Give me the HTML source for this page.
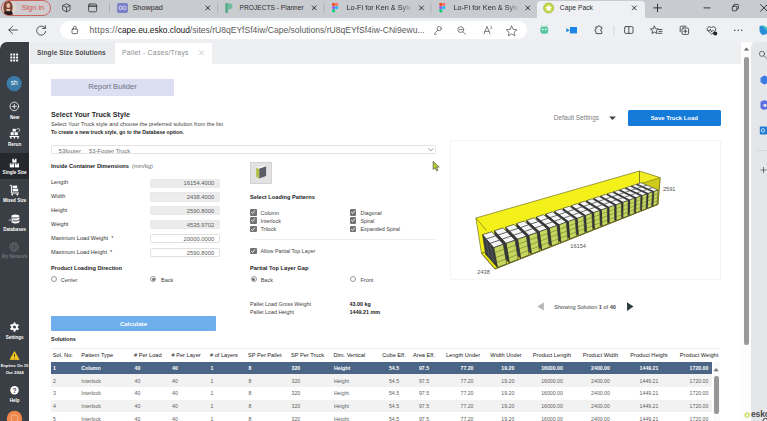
<!DOCTYPE html>
<html><head><meta charset="utf-8"><title>Cape Pack</title>
<style>
html,body{margin:0;padding:0;}
body{width:767px;height:421px;overflow:hidden;position:relative;background:#fff;font-family:"Liberation Sans",sans-serif;}
div{box-sizing:border-box;}
</style></head><body>
<div style="position:absolute;left:0.00px;top:0.00px;width:767.00px;height:18.00px;background:#c8cbd0;"></div>
<div style="position:absolute;left:0.00px;top:18.00px;width:767.00px;height:24.50px;background:#eef0f3;"></div>
<div style="position:absolute;left:537.00px;top:0.50px;width:107.70px;height:18.00px;background:#eef0f3;border-radius:4px 4px 0 0;"></div>
<div style="position:absolute;left:59.50px;top:21.40px;width:467.50px;height:17.70px;background:#ffffff;border-radius:9px;"></div>
<div style="position:absolute;left:1.3px;top:0.3px;width:49.5px;height:15.7px;border:0.6px solid #c8645e;border-radius:8px;box-sizing:border-box;background:#cfcbce"></div>
<svg style="position:absolute;left:0;top:0;" width="767" height="421" viewBox="0 0 767 421"><defs><clipPath id="av"><circle cx="9.3" cy="8.1" r="7.2"/></clipPath></defs><g clip-path="url(#av)"><rect x="0" y="0" width="20" height="17" fill="#ddd5d0"/><ellipse cx="8" cy="7.5" rx="4.6" ry="7" fill="#7a4030"/><ellipse cx="8.3" cy="5.6" rx="2" ry="2.5" fill="#e3bda5"/><path d="M3.5 16 q0 -6 4.8 -6 q4.800 0 4.800 6z" fill="#2a1c1c"/><rect x="6.3" y="9" width="4" height="2.2" fill="#e3bda5"/></g></svg>
<div style="position:absolute;top:2.90px;height:10px;line-height:10px;font-size:7.49px;font-weight:normal;color:#d25a55;white-space:nowrap;left:21.40px;">Sign in</div>
<div style="position:absolute;top:2.90px;height:10px;line-height:10px;font-size:7.31px;font-weight:normal;color:#2b2b2b;white-space:nowrap;left:132.50px;">Showpad</div>
<div style="position:absolute;top:2.90px;height:10px;line-height:10px;font-size:6.64px;font-weight:normal;color:#2b2b2b;white-space:nowrap;left:239.60px;">PROJECTS - Planner</div>
<div style="position:absolute;left:346.5px;top:3px;width:66px;height:10px;line-height:10px;font-size:7.32px;color:#2b2b2b;white-space:nowrap;overflow:hidden;-webkit-mask-image:linear-gradient(90deg,#000 80%,transparent 100%);">Lo-Fi for Ken &amp; Sylv</div>
<div style="position:absolute;left:453.5px;top:3px;width:66px;height:10px;line-height:10px;font-size:7.32px;color:#2b2b2b;white-space:nowrap;overflow:hidden;-webkit-mask-image:linear-gradient(90deg,#000 80%,transparent 100%);">Lo-Fi for Ken &amp; Sylv</div>
<div style="position:absolute;top:2.90px;height:10px;line-height:10px;font-size:6.79px;font-weight:normal;color:#2b2b2b;white-space:nowrap;left:559.80px;">Cape Pack</div>
<div style="position:absolute;left:117.30px;top:2.60px;width:10.50px;height:10.50px;background:#7c80c6;border-radius:2px;"></div>
<svg style="position:absolute;left:0;top:0;" width="767" height="421" viewBox="0 0 767 421"><g fill="none" stroke="#eceaff" stroke-width="0.8"><circle cx="120.6" cy="7.9" r="1.7"/><circle cx="124.4" cy="7.9" r="1.7"/></g></svg>
<svg style="position:absolute;left:0;top:0;" width="767" height="421" viewBox="0 0 767 421">
<g fill="none" stroke="#333" stroke-width="0.8" stroke-linecap="round" stroke-linejoin="round">
<path d="M63 5.5 L66.5 3.8 L70 5.5 L70 10 L66.5 11.8 L63 10 Z M63 5.5 L66.5 7.3 L70 5.5 M66.5 7.3 V11.8"/>
<rect x="88.6" y="4" width="8" height="7.8" rx="1.2"/><path d="M88.6 6.2 H96.6" stroke-width="1.3"/>
<path d="M109.5 3.5 V12.5" stroke="#999" stroke-width="0.5"/>
<path d="M217.7 3.5 V12.5 M323.9 3.5 V12.5 M430.8 3.5 V12.5" stroke="#999" stroke-width="0.5"/>
<path d="M205.8 5.9 l4 4 m0 -4 l-4 4 M312.2 5.9 l4 4 m0 -4 l-4 4 M419.4 5.9 l4 4 m0 -4 l-4 4 M525.8 5.9 l4 4 m0 -4 l-4 4 M632.3 5.9 l4 4 m0 -4 l-4 4" stroke="#222" stroke-width="0.9"/>
<path d="M653.7 7.9 h7.6 M657.5 4.1 v7.6" stroke="#222" stroke-width="0.9"/>
<path d="M704 7.9 h6" stroke="#222" stroke-width="0.9"/>
<rect x="732.3" y="6.2" width="4.6" height="4.6" rx="1" stroke="#222" stroke-width="0.8"/><path d="M733.8 6 V5.2 q0 -0.8 0.8 -0.8 h2.8 q1 0 1 1 v2.8 q0 .8 -.8 .8 h-0.6" stroke="#222" stroke-width="0.8"/>
<path d="M760.6 4.6 l6.6 6.6 m0 -6.6 l-6.6 6.6" stroke="#222" stroke-width="0.9"/>
</g>
<!-- planner favicon -->
<path d="M225.5 3.2 h4 q3 0 3 3 t-3 3 h-1.3 v3.6 h-2.7z" fill="#74bd9c"/><path d="M225.5 3.2 h2.2 v9.6 h-2.2z" fill="#55a987"/>
<!-- figma favicons -->
<g id="fig"><circle cx="333.6" cy="4.4" r="1.7" fill="#f24e1e"/><circle cx="336.6" cy="4.4" r="1.7" fill="#ff7262"/><circle cx="333.6" cy="7.6" r="1.7" fill="#a259ff"/><circle cx="336.6" cy="7.6" r="1.7" fill="#1abcfe"/><circle cx="333.6" cy="10.8" r="1.7" fill="#0acf83"/></g>
<use href="#fig" x="107.2" y="0"/>
<!-- cape pack favicon -->
<circle cx="548.6" cy="8" r="5" fill="#c9d94a"/><circle cx="548.6" cy="8" r="5" fill="none" stroke="#9db53a" stroke-width="0.8"/><path d="M548.6 4.6 l1 2.2 2.4 .3 -1.8 1.6 .5 2.4 -2.1 -1.2 -2.1 1.2 .5 -2.4 -1.8 -1.6 2.4 -.3z" fill="#fff"/>
<!-- toolbar icons -->
<g fill="none" stroke="#3a3a3a" stroke-width="0.85" stroke-linecap="round" stroke-linejoin="round">
<path d="M17.5 30 H8.8 M12.6 26.2 L8.8 30 L12.6 33.8"/>
<path d="M45.2 28.2 A4.6 4.6 0 1 0 45.8 31.4 M45.4 25.6 V28.4 H42.6"/>
<rect x="72" y="29" width="5.6" height="4.6" rx="0.8" stroke="#555"/><path d="M73.4 29 V27.6 a1.4 1.4 0 0 1 2.8 0 V29" stroke="#555"/>
<g stroke="#666">
<circle cx="439.3" cy="28.6" r="2.1"/><path d="M437.8 30.2 L434.6 33.4 v1 h1.4"/>
<circle cx="460.8" cy="29.6" r="2.9"/><path d="M463 31.8 L465.4 34.2 M459.4 29.6 h2.8"/>
<path d="M484 33.8 L487 26.4 L490 33.8 M485 31.4 h4 M491 26.2 q1.2 1.2 0 2.6"/>
<path d="M511.6 26 l1.6 3.4 3.7 .4 -2.8 2.5 .8 3.6 -3.3 -1.9 -3.3 1.9 .8 -3.6 -2.8 -2.5 3.7 -.4z"/>
</g>
<path d="M596 27 h1.6 a1.2 1.2 0 1 1 2.4 0 h1.8 v2 a1.2 1.2 0 1 0 0 2.4 v2.2 h-5.8 v-2.2 a1.2 1.2 0 1 1 0 -2.4 z"/>
<path d="M614 26 V34.5" stroke="#bbb" stroke-width="0.5"/>
<rect x="624.6" y="26.6" width="8.4" height="6.8" rx="1.2"/><path d="M628.8 26.6 V33.4"/>
<path d="M654.4 26.2 l1.2 2.5 2.7 .3 -2 1.8 .6 2.7 -2.5 -1.4 -2.4 1.4 .5 -2.7 -2 -1.8 2.7 -.3z M658.6 29.5 h3.4 M659 31.4 h3 M658 33.3 h4"/>
<rect x="682" y="28" width="6.6" height="6.4" rx="1.2"/><path d="M680.2 31.6 V27.4 q0 -1.2 1.2 -1.2 H686 M685.3 29.6 v3.2 M683.7 31.2 h3.2"/>
<path d="M711.5 34 l-4 -3.8 a2.3 2.3 0 0 1 3.6 -2.8 l.4 .5 .4 -.5 a2.3 2.3 0 0 1 3.6 2.8 z M707.6 30.6 h2 l.8 -1.4 1 2.6 .8 -1.2 h1"/>
</g>
<circle cx="715.2" cy="33.4" r="2" fill="#222"/>
<circle cx="734.8" cy="30.2" r="0.7" fill="#333"/><circle cx="738.3" cy="30.2" r="0.7" fill="#333"/><circle cx="741.8" cy="30.2" r="0.7" fill="#333"/>
<!-- green ext -->
<rect x="540.4" y="26.4" width="7.8" height="7.4" rx="2.4" fill="#5bc6a0"/><circle cx="542.8" cy="29.4" r="0.8" fill="#e8fff6"/><circle cx="545.8" cy="29.4" r="0.8" fill="#e8fff6"/><path d="M542 26.4 l-.8 -1.4 M546.4 26.4 l.8 -1.4" stroke="#5bc6a0" stroke-width="0.7"/>
<!-- blue ext -->
<rect x="570" y="27" width="7" height="6.4" fill="#1b86e8"/><path d="M566.3 28.2 l3.6 2 -3.6 2z" fill="#1b86e8"/>
<!-- copilot -->
<path d="M759.5 26.5 q3 -2 5.5 0.5 l2 3.5 v3 q-3 2.5 -6 .5 l-1.5 -3z" fill="#2a8fd6"/><path d="M762 26 q2.5 -1 5 1.5 v3z" fill="#3cc7c0"/>
</svg>
<div style="position:absolute;top:25.40px;height:10px;line-height:10px;font-size:8.55px;font-weight:normal;color:#555;white-space:nowrap;left:89.40px;"><span style="color:#5a5a5a;letter-spacing:0.33px">https://</span><span style="color:#161616;font-size:8.4px">cape.eu.esko.cloud</span><span style="color:#5a5a5a">/sites/rU8qEYfSf4iw/Cape/solutions/rU8qEYfSf4iw-CNi9ewu...</span></div>
<div style="position:absolute;left:0.00px;top:42.50px;width:767.00px;height:379.00px;background:#ffffff;"></div>
<div style="position:absolute;left:29.50px;top:42.30px;width:715.00px;height:21.50px;background:#eeeff0;"></div>
<div style="position:absolute;left:115.00px;top:43.30px;width:97.00px;height:20.70px;background:#ffffff;"></div>
<div style="position:absolute;left:30.00px;top:42.30px;width:85.00px;height:21.50px;background:#ebecee;"></div>
<div style="position:absolute;top:47.50px;height:10px;line-height:10px;font-size:6.50px;font-weight:bold;color:#474a4e;white-space:nowrap;left:37.00px;letter-spacing:0.15px;">Single Size Solutions</div>
<div style="position:absolute;top:47.50px;height:10px;line-height:10px;font-size:6.90px;font-weight:normal;color:#8a8d91;white-space:nowrap;left:122.00px;letter-spacing:0.25px;">Pallet - Cases/Trays</div>
<svg style="position:absolute;left:0;top:0;" width="767" height="421" viewBox="0 0 767 421"><path d="M199.2 50.4 l4.6 4.6 m0 -4.6 l-4.6 4.6" stroke="#b4b4b4" stroke-width="0.7" fill="none"/></svg>
<div style="position:absolute;left:0.00px;top:42.30px;width:29.30px;height:379.00px;background:#3a3e45;border-radius:7px 0 0 0;"></div>
<div style="position:absolute;left:0.00px;top:152.60px;width:29.30px;height:26.70px;background:#25282d;"></div>
<svg style="position:absolute;left:0;top:0;" width="767" height="421" viewBox="0 0 767 421">
<g fill="#fff">
<rect x="10.3" y="53.6" width="2" height="2" rx="0.3"/><rect x="10.3" y="56.5" width="2" height="2" rx="0.3"/><rect x="10.3" y="59.4" width="2" height="2" rx="0.3"/><rect x="13.2" y="53.6" width="2" height="2" rx="0.3"/><rect x="13.2" y="56.5" width="2" height="2" rx="0.3"/><rect x="13.2" y="59.4" width="2" height="2" rx="0.3"/><rect x="16.1" y="53.6" width="2" height="2" rx="0.3"/><rect x="16.1" y="56.5" width="2" height="2" rx="0.3"/><rect x="16.1" y="59.4" width="2" height="2" rx="0.3"/>
</g>
<circle cx="14.2" cy="83.6" r="7.6" fill="#3c7ba8"/>
<g fill="none" stroke="#fff" stroke-width="0.8" stroke-linecap="round">
<circle cx="14.3" cy="106.4" r="4.3"/><path d="M14.3 104.2 v4.4 M12.1 106.4 h4.4"/>
</g>
<!-- rerun -->
<g fill="#fff">
<rect x="10.6" y="132.2" width="3.2" height="3" /><rect x="14.6" y="132.2" width="3.2" height="3"/><rect x="12.6" y="128.8" width="3.2" height="2.8"/>
<rect x="9.6" y="136" width="9.6" height="1"/><rect x="10.2" y="137" width="1.4" height="1.6"/><rect x="13.7" y="137" width="1.4" height="1.6"/><rect x="17.2" y="137" width="1.4" height="1.6"/>
</g>
<path d="M16.6 130 a1.6 1.6 0 1 1 1.6 1.6" fill="none" stroke="#fff" stroke-width="0.6"/>
<!-- single size -->
<g fill="#fff">
<rect x="12.3" y="158.8" width="4.2" height="3.8"/><rect x="9.8" y="163.4" width="4.2" height="4"/><rect x="14.8" y="163.4" width="4.2" height="4"/>
</g>
<g fill="#25282d"><rect x="13.9" y="158.8" width="1" height="1.4"/><rect x="11.4" y="163.4" width="1" height="1.4"/><rect x="16.4" y="163.4" width="1" height="1.4"/></g>
<!-- mixed size -->
<g fill="none" stroke="#fff" stroke-width="1" stroke-linejoin="miter">
<path d="M9.8 185.4 h1.6 v7.6 h7.6"/>
</g>
<g fill="#fff"><rect x="12.6" y="185.6" width="4.6" height="2.6"/><rect x="12.6" y="188.8" width="5.6" height="2.6"/><circle cx="12.2" cy="194.4" r="1"/><circle cx="17.4" cy="194.4" r="1"/></g>
<!-- databases -->
<g fill="#fff">
<ellipse cx="15.4" cy="216" rx="4" ry="1.6"/>
<path d="M11.4 217.2 q4 2.4 8 0 v2 q-4 2.4 -8 0z M11.4 220.2 q4 2.4 8 0 v2 q-4 2.4 -8 0z"/>
<path d="M8.6 219.4 h3.4 v-1.2 l2.2 1.8 -2.2 1.8 v-1.2 h-3.4z" stroke="#3a3e45" stroke-width="0.4"/>
</g>
<!-- my network -->
<g fill="none" stroke="#70747b" stroke-width="0.6">
<circle cx="14.2" cy="247" r="4.4"/><ellipse cx="14.2" cy="247" rx="2" ry="4.4"/><path d="M9.8 247 h8.8 M10.5 244.8 h7.4 M10.5 249.2 h7.4"/>
</g>
<!-- settings gear -->
<g transform="translate(14.5 327.1)">
<g fill="#fff">
<circle r="3.3"/>
<rect x="-1" y="-4.6" width="2" height="9.2"/>
<rect x="-1" y="-4.6" width="2" height="9.2" transform="rotate(60)"/>
<rect x="-1" y="-4.6" width="2" height="9.2" transform="rotate(120)"/>
</g>
<circle r="1.5" fill="#3a3e45"/>
</g>
<!-- warning -->
<path d="M14.5 351.6 L19 359.4 H10 Z" fill="#f6c51c" stroke="#f6c51c" stroke-width="0.8" stroke-linejoin="round"/>
<path d="M14.5 354.2 v2.8 M14.5 358 v0.7" stroke="#3a3e45" stroke-width="0.9"/>
<!-- help -->
<circle cx="14.5" cy="390.3" r="4.2" fill="#fff"/>
<!-- orange -->
<circle cx="14.5" cy="418.4" r="7.7" fill="#f0874c"/>
<circle cx="14.5" cy="418.4" r="3.6" fill="none" stroke="#f8b58c" stroke-width="1"/>
</svg>
<div style="position:absolute;top:78.40px;height:10px;line-height:10px;font-size:6.60px;font-weight:normal;color:#ffffff;white-space:nowrap;left:4.20px;width:20.00px;text-align:center;">sh</div>
<div style="position:absolute;top:385.50px;height:10px;line-height:10px;font-size:6.80px;font-weight:bold;color:#3a3e45;white-space:nowrap;left:9.50px;width:10.00px;text-align:center;">?</div>
<div style="position:absolute;top:112.50px;height:10px;line-height:10px;font-size:4.55px;font-weight:bold;color:#ffffff;white-space:nowrap;left:-5.40px;width:40.00px;text-align:center;">New</div>
<div style="position:absolute;top:139.80px;height:10px;line-height:10px;font-size:4.55px;font-weight:bold;color:#ffffff;white-space:nowrap;left:-5.40px;width:40.00px;text-align:center;">Rerun</div>
<div style="position:absolute;top:168.30px;height:10px;line-height:10px;font-size:4.55px;font-weight:bold;color:#ffffff;white-space:nowrap;left:-5.40px;width:40.00px;text-align:center;">Single Size</div>
<div style="position:absolute;top:196.30px;height:10px;line-height:10px;font-size:4.55px;font-weight:bold;color:#ffffff;white-space:nowrap;left:-5.40px;width:40.00px;text-align:center;">Mixed Size</div>
<div style="position:absolute;top:224.80px;height:10px;line-height:10px;font-size:4.55px;font-weight:bold;color:#ffffff;white-space:nowrap;left:-5.40px;width:40.00px;text-align:center;">Databases</div>
<div style="position:absolute;top:252.30px;height:10px;line-height:10px;font-size:4.55px;font-weight:bold;color:#70747b;white-space:nowrap;left:-5.40px;width:40.00px;text-align:center;">My Network</div>
<div style="position:absolute;top:332.70px;height:10px;line-height:10px;font-size:4.55px;font-weight:bold;color:#ffffff;white-space:nowrap;left:-5.40px;width:40.00px;text-align:center;">Settings</div>
<div style="position:absolute;top:361.40px;height:10px;line-height:10px;font-size:4.15px;font-weight:bold;color:#ffffff;white-space:nowrap;left:-5.40px;width:40.00px;text-align:center;">Expires On 15</div>
<div style="position:absolute;top:367.70px;height:10px;line-height:10px;font-size:4.30px;font-weight:bold;color:#ffffff;white-space:nowrap;left:-5.40px;width:40.00px;text-align:center;">Oct 2024</div>
<div style="position:absolute;top:395.90px;height:10px;line-height:10px;font-size:4.55px;font-weight:bold;color:#ffffff;white-space:nowrap;left:-5.40px;width:40.00px;text-align:center;">Help</div>
<div style="position:absolute;left:741.30px;top:42.30px;width:10.00px;height:379.00px;background:#fdfdfd;"></div>
<div style="position:absolute;left:744.20px;top:56.60px;width:4.70px;height:288.60px;background:#999999;border-radius:2.35px;"></div>
<svg style="position:absolute;left:0;top:0;" width="767" height="421" viewBox="0 0 767 421"><polygon points="743.9,50.6 749.1,50.6 746.5,47.6" fill="#666"/></svg>
<div style="position:absolute;left:751.00px;top:42.30px;width:16.00px;height:379.00px;background:#e5e6ea;border-radius:5px 0 0 0;"></div>
<svg style="position:absolute;left:0;top:0;" width="767" height="421" viewBox="0 0 767 421">
<g fill="none" stroke="#555" stroke-width="0.8" stroke-linecap="round"><circle cx="762" cy="53.8" r="2.6"/><path d="M764 55.8 L766.4 58.2"/></g>
<path d="M760.5 78 l3.5 -2.5 3 1 v7 l-3 1 -3.5 -2.5z" fill="#3d7be0"/>
<path d="M760.5 102 q3 -3 6.5 -1 v8 q-3.500 2 -6.500 -1z" fill="#5a6fe0"/><circle cx="765" cy="105.3" r="1.6" fill="#e5e6ea"/>
<rect x="759.8" y="126.4" width="7.2" height="8" rx="1" fill="#1f7ad6"/><circle cx="763" cy="130.4" r="1.7" fill="none" stroke="#fff" stroke-width="0.8"/>
<path d="M757 150.5 H767" stroke="#c9c9c9" stroke-width="0.6"/>
<path d="M760.5 170 h6 M763.500 167 v6" stroke="#444" stroke-width="0.7"/>
<!-- esko logo -->
<circle cx="747.2" cy="415.1" r="2.7" fill="#c5d64a"/><path d="M747.2 413 l.6 1.400 1.500 .1 -1.100 1 .4 1.500 -1.400 -.8 -1.400 .8 .4 -1.500 -1.100 -1 1.500 -.1z" fill="#fff"/>
<circle cx="765.500" cy="421" r="2.600" fill="none" stroke="#333" stroke-width="1"/>
</svg>
<div style="position:absolute;top:409.30px;height:10px;line-height:10px;font-size:8.60px;font-weight:bold;color:#4a4a4a;white-space:nowrap;left:751.00px;letter-spacing:-0.2px;">esko</div>
<div style="position:absolute;left:51.00px;top:78.50px;width:123.00px;height:17.00px;background:#dcdff2;"></div>
<div style="position:absolute;top:82.00px;height:10px;line-height:10px;font-size:7.60px;font-weight:normal;color:#6d7080;white-space:nowrap;left:12.50px;width:200.00px;text-align:center;">Report Builder</div>
<div style="position:absolute;top:110.00px;height:10px;line-height:10px;font-size:7.17px;font-weight:bold;color:#2a2a2a;white-space:nowrap;left:51.00px;">Select Your Truck Style</div>
<div style="position:absolute;top:119.00px;height:10px;line-height:10px;font-size:5.60px;font-weight:normal;color:#444;white-space:nowrap;left:51.00px;">Select Your Truck style and choose the preferred solution from the list</div>
<div style="position:absolute;top:127.00px;height:10px;line-height:10px;font-size:5.15px;font-weight:bold;color:#222;white-space:nowrap;left:51.00px;">To create a new truck style, go to the Database option.</div>
<div style="position:absolute;left:51px;top:145px;width:384.5px;height:9px;border:0.6px solid #e3e3e3;border-radius:1.5px;box-sizing:border-box;background:#fff"></div>
<svg style="position:absolute;left:0;top:0;z-index:5;" width="767" height="421" viewBox="0 0 767 421"><path d="M428.3 148.4 L430.8 150.8 L433.3 148.4" fill="none" stroke="#666" stroke-width="0.7"/><path d="M433.1 161.3 L433.1 169.6 L435.2 167.8 L436.7 170.9 L437.9 170.3 L436.5 167.3 L439.3 167.1 Z" fill="#b7ca35" stroke="#2b2b2b" stroke-width="0.5" stroke-linejoin="round"/></svg>
<div style="position:absolute;top:145.80px;height:10px;line-height:10px;font-size:6.10px;font-weight:normal;color:#6f6f6f;white-space:nowrap;left:58.60px;">53footer</div>
<div style="position:absolute;top:145.80px;height:10px;line-height:10px;font-size:5.85px;font-weight:normal;color:#6f6f6f;white-space:nowrap;left:88.90px;">53-Footer Truck</div>
<div style="position:absolute;top:161.20px;height:10px;line-height:10px;font-size:5.66px;font-weight:bold;color:#222;white-space:nowrap;left:51.00px;">Inside Container Dimensions</div>
<div style="position:absolute;top:161.20px;height:10px;line-height:10px;font-size:5.70px;font-weight:normal;color:#666;white-space:nowrap;left:132.00px;">(mm/kg)</div>
<div style="position:absolute;top:177.40px;height:10px;line-height:10px;font-size:5.60px;font-weight:normal;color:#333;white-space:nowrap;left:51.00px;">Length</div>
<div style="position:absolute;left:150.00px;top:178.50px;width:69.50px;height:9.20px;background:#ececec;border-radius:1.5px;border:0.5px solid #e8e8e8;box-sizing:border-box;"></div>
<div style="position:absolute;top:178.30px;height:10px;line-height:10px;font-size:5.80px;font-weight:normal;color:#5c5c5c;white-space:nowrap;left:14.20px;width:200.00px;text-align:right;">16154.4000</div>
<div style="position:absolute;top:191.27px;height:10px;line-height:10px;font-size:5.60px;font-weight:normal;color:#333;white-space:nowrap;left:51.00px;">Width</div>
<div style="position:absolute;left:150.00px;top:192.37px;width:69.50px;height:9.20px;background:#ececec;border-radius:1.5px;border:0.5px solid #e8e8e8;box-sizing:border-box;"></div>
<div style="position:absolute;top:192.17px;height:10px;line-height:10px;font-size:5.80px;font-weight:normal;color:#5c5c5c;white-space:nowrap;left:14.20px;width:200.00px;text-align:right;">2438.4000</div>
<div style="position:absolute;top:205.14px;height:10px;line-height:10px;font-size:5.60px;font-weight:normal;color:#333;white-space:nowrap;left:51.00px;">Height</div>
<div style="position:absolute;left:150.00px;top:206.24px;width:69.50px;height:9.20px;background:#ececec;border-radius:1.5px;border:0.5px solid #e8e8e8;box-sizing:border-box;"></div>
<div style="position:absolute;top:206.04px;height:10px;line-height:10px;font-size:5.80px;font-weight:normal;color:#5c5c5c;white-space:nowrap;left:14.20px;width:200.00px;text-align:right;">2590.8000</div>
<div style="position:absolute;top:219.01px;height:10px;line-height:10px;font-size:5.60px;font-weight:normal;color:#333;white-space:nowrap;left:51.00px;">Weight</div>
<div style="position:absolute;left:150.00px;top:220.11px;width:69.50px;height:9.20px;background:#ececec;border-radius:1.5px;border:0.5px solid #e8e8e8;box-sizing:border-box;"></div>
<div style="position:absolute;top:219.91px;height:10px;line-height:10px;font-size:5.80px;font-weight:normal;color:#5c5c5c;white-space:nowrap;left:14.20px;width:200.00px;text-align:right;">4535.9702</div>
<div style="position:absolute;top:232.88px;height:10px;line-height:10px;font-size:5.60px;font-weight:normal;color:#333;white-space:nowrap;left:51.00px;">Maximum Load Weight&nbsp; *</div>
<div style="position:absolute;left:150.00px;top:233.98px;width:69.50px;height:9.20px;background:#ffffff;border-radius:1.5px;border:0.6px solid #e0e0e0;box-sizing:border-box;"></div>
<div style="position:absolute;top:233.78px;height:10px;line-height:10px;font-size:5.80px;font-weight:normal;color:#5c5c5c;white-space:nowrap;left:14.20px;width:200.00px;text-align:right;">20000.0000</div>
<div style="position:absolute;top:246.75px;height:10px;line-height:10px;font-size:5.60px;font-weight:normal;color:#333;white-space:nowrap;left:51.00px;">Maximum Load Height&nbsp; *</div>
<div style="position:absolute;left:150.00px;top:247.85px;width:69.50px;height:9.20px;background:#ffffff;border-radius:1.5px;border:0.6px solid #e0e0e0;box-sizing:border-box;"></div>
<div style="position:absolute;top:247.65px;height:10px;line-height:10px;font-size:5.80px;font-weight:normal;color:#5c5c5c;white-space:nowrap;left:14.20px;width:200.00px;text-align:right;">2590.8000</div>
<div style="position:absolute;top:263.00px;height:10px;line-height:10px;font-size:5.66px;font-weight:bold;color:#222;white-space:nowrap;left:51.00px;">Product Loading Direction</div>
<div style="position:absolute;left:51.00px;top:276.30px;width:6px;height:6px;border:0.65px solid #999;border-radius:50%;box-sizing:border-box;background:#fff"></div>
<div style="position:absolute;top:274.50px;height:10px;line-height:10px;font-size:5.50px;font-weight:normal;color:#444;white-space:nowrap;left:60.80px;">Center</div>
<div style="position:absolute;left:150.40px;top:276.30px;width:6px;height:6px;border:0.65px solid #999;border-radius:50%;box-sizing:border-box;background:#fff"></div>
<div style="position:absolute;left:152.00px;top:277.90px;width:2.8px;height:2.8px;border-radius:50%;background:#777"></div>
<div style="position:absolute;top:274.50px;height:10px;line-height:10px;font-size:5.50px;font-weight:normal;color:#444;white-space:nowrap;left:161.00px;">Back</div>
<div style="position:absolute;left:51.00px;top:316.20px;width:165.00px;height:14.60px;background:#6eaeea;border-radius:1px;"></div>
<div style="position:absolute;top:318.50px;height:10px;line-height:10px;font-size:6.10px;font-weight:bold;color:#ffffff;white-space:nowrap;left:33.50px;width:200.00px;text-align:center;">Calculate</div>
<div style="position:absolute;top:334.00px;height:10px;line-height:10px;font-size:5.45px;font-weight:bold;color:#222;white-space:nowrap;left:51.00px;">Solutions</div>
<div style="position:absolute;left:250.20px;top:161.80px;width:21.60px;height:21.90px;background:#e2e2e2;border:0.6px solid #d2d2d2;box-sizing:border-box;"></div>
<svg style="position:absolute;left:0;top:0;" width="767" height="421" viewBox="0 0 767 421"><polygon points="256,167.9 259.3,168.6 259.3,178.5 256.3,177.1" fill="#b3c048"/><polygon points="259.3,168.6 266.1,166.3 266.1,176.1 259.3,178.5" fill="#595d66"/><polygon points="256,167.9 262.8,165.7 266.1,166.3 259.3,168.6" fill="#f4f4f4"/></svg>
<div style="position:absolute;top:191.50px;height:10px;line-height:10px;font-size:5.70px;font-weight:bold;color:#222;white-space:nowrap;left:250.00px;">Select Loading Patterns</div>
<div style="position:absolute;left:250.40px;top:209.40px;width:6.2px;height:6.2px;background:#737373;border-radius:1px;"></div>
<svg style="position:absolute;left:250.40px;top:209.40px" width="6.2" height="6.2" viewBox="0 0 6.2 6.2"><path d="M1.3 3.2 L2.6 4.5 L4.9 1.6" fill="none" stroke="#fff" stroke-width="0.9"/></svg>
<div style="position:absolute;top:207.70px;height:10px;line-height:10px;font-size:5.40px;font-weight:normal;color:#444;white-space:nowrap;left:260.50px;">Column</div>
<div style="position:absolute;left:349.70px;top:209.40px;width:6.2px;height:6.2px;background:#737373;border-radius:1px;"></div>
<svg style="position:absolute;left:349.70px;top:209.40px" width="6.2" height="6.2" viewBox="0 0 6.2 6.2"><path d="M1.3 3.2 L2.6 4.5 L4.9 1.6" fill="none" stroke="#fff" stroke-width="0.9"/></svg>
<div style="position:absolute;top:207.70px;height:10px;line-height:10px;font-size:5.40px;font-weight:normal;color:#444;white-space:nowrap;left:360.50px;">Diagonal</div>
<div style="position:absolute;left:250.40px;top:217.45px;width:6.2px;height:6.2px;background:#737373;border-radius:1px;"></div>
<svg style="position:absolute;left:250.40px;top:217.45px" width="6.2" height="6.2" viewBox="0 0 6.2 6.2"><path d="M1.3 3.2 L2.6 4.5 L4.9 1.6" fill="none" stroke="#fff" stroke-width="0.9"/></svg>
<div style="position:absolute;top:215.75px;height:10px;line-height:10px;font-size:5.40px;font-weight:normal;color:#444;white-space:nowrap;left:260.50px;">Interlock</div>
<div style="position:absolute;left:349.70px;top:217.45px;width:6.2px;height:6.2px;background:#737373;border-radius:1px;"></div>
<svg style="position:absolute;left:349.70px;top:217.45px" width="6.2" height="6.2" viewBox="0 0 6.2 6.2"><path d="M1.3 3.2 L2.6 4.5 L4.9 1.6" fill="none" stroke="#fff" stroke-width="0.9"/></svg>
<div style="position:absolute;top:215.75px;height:10px;line-height:10px;font-size:5.40px;font-weight:normal;color:#444;white-space:nowrap;left:360.50px;">Spiral</div>
<div style="position:absolute;left:250.40px;top:225.50px;width:6.2px;height:6.2px;background:#737373;border-radius:1px;"></div>
<svg style="position:absolute;left:250.40px;top:225.50px" width="6.2" height="6.2" viewBox="0 0 6.2 6.2"><path d="M1.3 3.2 L2.6 4.5 L4.9 1.6" fill="none" stroke="#fff" stroke-width="0.9"/></svg>
<div style="position:absolute;top:223.80px;height:10px;line-height:10px;font-size:5.40px;font-weight:normal;color:#444;white-space:nowrap;left:260.50px;">Trilock</div>
<div style="position:absolute;left:349.70px;top:225.50px;width:6.2px;height:6.2px;background:#737373;border-radius:1px;"></div>
<svg style="position:absolute;left:349.70px;top:225.50px" width="6.2" height="6.2" viewBox="0 0 6.2 6.2"><path d="M1.3 3.2 L2.6 4.5 L4.9 1.6" fill="none" stroke="#fff" stroke-width="0.9"/></svg>
<div style="position:absolute;top:223.80px;height:10px;line-height:10px;font-size:5.40px;font-weight:normal;color:#444;white-space:nowrap;left:360.50px;">Expanded Spiral</div>
<div style="position:absolute;left:253.00px;top:239.30px;width:183.00px;height:0.60px;background:#ededed;"></div>
<div style="position:absolute;left:250.40px;top:247.90px;width:6.2px;height:6.2px;background:#737373;border-radius:1px;"></div>
<svg style="position:absolute;left:250.40px;top:247.90px" width="6.2" height="6.2" viewBox="0 0 6.2 6.2"><path d="M1.3 3.2 L2.6 4.5 L4.9 1.6" fill="none" stroke="#fff" stroke-width="0.9"/></svg>
<div style="position:absolute;top:246.20px;height:10px;line-height:10px;font-size:5.40px;font-weight:normal;color:#444;white-space:nowrap;left:260.50px;">Allow Partial Top Layer</div>
<div style="position:absolute;top:262.80px;height:10px;line-height:10px;font-size:5.70px;font-weight:bold;color:#222;white-space:nowrap;left:250.00px;">Partial Top Layer Gap</div>
<div style="position:absolute;left:250.50px;top:276.30px;width:6px;height:6px;border:0.65px solid #999;border-radius:50%;box-sizing:border-box;background:#fff"></div>
<div style="position:absolute;left:252.10px;top:277.90px;width:2.8px;height:2.8px;border-radius:50%;background:#777"></div>
<div style="position:absolute;top:274.50px;height:10px;line-height:10px;font-size:5.50px;font-weight:normal;color:#444;white-space:nowrap;left:260.70px;">Back</div>
<div style="position:absolute;left:349.80px;top:276.30px;width:6px;height:6px;border:0.65px solid #999;border-radius:50%;box-sizing:border-box;background:#fff"></div>
<div style="position:absolute;top:274.50px;height:10px;line-height:10px;font-size:5.50px;font-weight:normal;color:#444;white-space:nowrap;left:360.50px;">Front</div>
<div style="position:absolute;top:298.90px;height:10px;line-height:10px;font-size:5.40px;font-weight:normal;color:#444;white-space:nowrap;left:250.00px;">Pallet Load Gross Weight</div>
<div style="position:absolute;top:298.90px;height:10px;line-height:10px;font-size:5.40px;font-weight:bold;color:#222;white-space:nowrap;left:349.60px;">43.00 kg</div>
<div style="position:absolute;top:306.60px;height:10px;line-height:10px;font-size:5.40px;font-weight:normal;color:#444;white-space:nowrap;left:250.00px;">Pallet Load Height</div>
<div style="position:absolute;top:306.60px;height:10px;line-height:10px;font-size:5.40px;font-weight:bold;color:#222;white-space:nowrap;left:349.60px;">1449.21 mm</div>
<div style="position:absolute;top:112.50px;height:10px;line-height:10px;font-size:6.42px;font-weight:normal;color:#7d7d7d;white-space:nowrap;left:553.70px;">Default Settings</div>
<svg style="position:absolute;left:0;top:0;" width="767" height="421" viewBox="0 0 767 421"><polygon points="609.1,116.5 615.9,116.5 612.5,120.1" fill="#444"/></svg>
<div style="position:absolute;left:627.80px;top:110.10px;width:93.00px;height:15.70px;background:#147bd9;border-radius:1.5px;"></div>
<div style="position:absolute;top:112.90px;height:10px;line-height:10px;font-size:5.96px;font-weight:bold;color:#ffffff;white-space:nowrap;left:574.30px;width:200.00px;text-align:center;">Save Truck Load</div>
<div style="position:absolute;left:450px;top:140px;width:271px;height:139.6px;border:0.7px solid #f5f5f5;box-sizing:border-box;"></div>
<svg style="position:absolute;left:0;top:0;" width="767" height="421" viewBox="0 0 767 421"><polygon points="481.5,253.4 475.9,218.0 639.5,171.0 639.5,194.0" fill="#f4f019" stroke="#5d5c12" stroke-width="0.6" stroke-linejoin="round" />
<polygon points="639.5,194.0 639.5,171.0 660.1,177.6 658.0,204.4" fill="#f1ed22" stroke="#5d5c12" stroke-width="0.6" stroke-linejoin="round" />
<polygon points="481.5,253.4 495.0,269.0 658.0,204.4 639.5,194.0" fill="#ece812" stroke="#5d5c12" stroke-width="0.6" stroke-linejoin="round" />
<line x1="475.9" y1="218.0" x2="486.4" y2="230.4" stroke="#5d5c12" stroke-width="0.6"/>
<polygon points="660.1,177.6 635.9,185.3 635.9,195.3 658.0,204.4" fill="#cfcb1a" stroke="none" stroke-width="0" stroke-linejoin="round" />
<line x1="660.1" y1="177.6" x2="635.9" y2="185.3" stroke="#5d5c12" stroke-width="0.5"/>
<polygon points="636.9,184.1 641.1,182.7 658.1,190.0 653.8,191.5" fill="#f6f6f6" stroke="#34373a" stroke-width="0.5625708558806046" stroke-linejoin="round" />
<line x1="642.5" y1="186.6" x2="646.8" y2="185.1" stroke="#34373a" stroke-width="0.6429381210064053"/>
<line x1="648.2" y1="189.0" x2="652.5" y2="187.6" stroke="#34373a" stroke-width="0.6429381210064053"/>
<polygon points="652.8,206.2 657.0,204.5 658.1,190.0 653.8,191.5" fill="#c6d75f" stroke="#34373a" stroke-width="0.5625708558806046" stroke-linejoin="round" />
<line x1="653.1" y1="202.5" x2="657.3" y2="200.9" stroke="#59631f" stroke-width="0.40183632562900334"/>
<line x1="653.3" y1="198.8" x2="657.6" y2="197.2" stroke="#59631f" stroke-width="0.40183632562900334"/>
<line x1="653.5" y1="195.2" x2="657.9" y2="193.6" stroke="#59631f" stroke-width="0.40183632562900334"/>
<polygon points="636.9,197.0 652.8,206.2 653.8,191.5 636.9,184.1" fill="#34373a" stroke="#26282a" stroke-width="0.5" stroke-linejoin="round" />
<polygon points="631.4,185.9 635.7,184.5 652.5,191.9 648.1,193.5" fill="#f6f6f6" stroke="#34373a" stroke-width="0.5672916805614239" stroke-linejoin="round" />
<line x1="636.9" y1="188.5" x2="641.3" y2="187.0" stroke="#34373a" stroke-width="0.648333349213056"/>
<line x1="642.5" y1="191.0" x2="646.9" y2="189.5" stroke="#34373a" stroke-width="0.648333349213056"/>
<polygon points="647.2,208.4 651.6,206.6 652.5,191.9 648.1,193.5" fill="#c6d75f" stroke="#34373a" stroke-width="0.5672916805614239" stroke-linejoin="round" />
<line x1="647.4" y1="204.7" x2="651.8" y2="203.0" stroke="#59631f" stroke-width="0.40520834325815996"/>
<line x1="647.6" y1="200.9" x2="652.1" y2="199.3" stroke="#59631f" stroke-width="0.40520834325815996"/>
<line x1="647.9" y1="197.2" x2="652.3" y2="195.6" stroke="#59631f" stroke-width="0.40520834325815996"/>
<polygon points="631.5,199.1 647.2,208.4 648.1,193.5 631.4,185.9" fill="#34373a" stroke="#26282a" stroke-width="0.5" stroke-linejoin="round" />
<polygon points="625.6,187.8 630.1,186.3 646.8,194.0 642.1,195.6" fill="#f6f6f6" stroke="#34373a" stroke-width="0.5721815659518599" stroke-linejoin="round" />
<line x1="631.1" y1="190.4" x2="635.7" y2="188.9" stroke="#34373a" stroke-width="0.6539217896592685"/>
<line x1="636.6" y1="193.0" x2="641.2" y2="191.4" stroke="#34373a" stroke-width="0.6539217896592685"/>
<polygon points="641.5,210.6 646.0,208.9 646.8,194.0 642.1,195.6" fill="#c6d75f" stroke="#34373a" stroke-width="0.5721815659518599" stroke-linejoin="round" />
<line x1="641.6" y1="206.9" x2="646.2" y2="205.1" stroke="#59631f" stroke-width="0.4087011185370428"/>
<line x1="641.8" y1="203.1" x2="646.4" y2="201.4" stroke="#59631f" stroke-width="0.4087011185370428"/>
<line x1="642.0" y1="199.4" x2="646.6" y2="197.7" stroke="#59631f" stroke-width="0.4087011185370428"/>
<polygon points="625.8,201.2 641.5,210.6 642.1,195.6 625.6,187.8" fill="#34373a" stroke="#26282a" stroke-width="0.5" stroke-linejoin="round" />
<polygon points="619.7,189.8 624.4,188.2 640.8,196.1 636.0,197.8" fill="#f6f6f6" stroke="#34373a" stroke-width="0.5772497591536472" stroke-linejoin="round" />
<line x1="625.1" y1="192.4" x2="629.8" y2="190.8" stroke="#34373a" stroke-width="0.6597140104613111"/>
<line x1="630.5" y1="195.1" x2="635.3" y2="193.5" stroke="#34373a" stroke-width="0.6597140104613111"/>
<polygon points="635.5,213.0 640.2,211.2 640.8,196.1 636.0,197.8" fill="#c6d75f" stroke="#34373a" stroke-width="0.5772497591536472" stroke-linejoin="round" />
<line x1="635.6" y1="209.2" x2="640.3" y2="207.4" stroke="#59631f" stroke-width="0.4123212565383194"/>
<line x1="635.7" y1="205.4" x2="640.5" y2="203.6" stroke="#59631f" stroke-width="0.4123212565383194"/>
<line x1="635.8" y1="201.6" x2="640.6" y2="199.8" stroke="#59631f" stroke-width="0.4123212565383194"/>
<polygon points="620.0,203.4 635.5,213.0 636.0,197.8 619.7,189.8" fill="#34373a" stroke="#26282a" stroke-width="0.5" stroke-linejoin="round" />
<polygon points="613.5,191.8 618.4,190.2 634.6,198.2 629.6,200.0" fill="#f6f6f6" stroke="#34373a" stroke-width="0.5825061941765372" stroke-linejoin="round" />
<line x1="618.9" y1="194.5" x2="623.8" y2="192.9" stroke="#34373a" stroke-width="0.6657213647731854"/>
<line x1="624.2" y1="197.3" x2="629.2" y2="195.6" stroke="#34373a" stroke-width="0.6657213647731854"/>
<polygon points="629.3,215.5 634.1,213.5 634.6,198.2 629.6,200.0" fill="#c6d75f" stroke="#34373a" stroke-width="0.5825061941765372" stroke-linejoin="round" />
<line x1="629.3" y1="211.6" x2="634.2" y2="209.7" stroke="#59631f" stroke-width="0.41607585298324085"/>
<line x1="629.4" y1="207.7" x2="634.3" y2="205.9" stroke="#59631f" stroke-width="0.41607585298324085"/>
<line x1="629.5" y1="203.9" x2="634.5" y2="202.1" stroke="#59631f" stroke-width="0.41607585298324085"/>
<polygon points="614.0,205.7 629.3,215.5 629.6,200.0 613.5,191.8" fill="#34373a" stroke="#26282a" stroke-width="0.5" stroke-linejoin="round" />
<polygon points="607.1,193.9 612.1,192.2 628.1,200.5 622.9,202.3" fill="#f6f6f6" stroke="#34373a" stroke-width="0.5879615569277112" stroke-linejoin="round" />
<line x1="612.4" y1="196.7" x2="617.5" y2="195.0" stroke="#34373a" stroke-width="0.6719560650602415"/>
<line x1="617.7" y1="199.5" x2="622.8" y2="197.7" stroke="#34373a" stroke-width="0.6719560650602415"/>
<polygon points="622.8,218.0 627.9,216.0 628.1,200.5 622.9,202.3" fill="#c6d75f" stroke="#34373a" stroke-width="0.5879615569277112" stroke-linejoin="round" />
<line x1="622.8" y1="214.1" x2="627.9" y2="212.1" stroke="#59631f" stroke-width="0.41997254066265094"/>
<line x1="622.9" y1="210.2" x2="628.0" y2="208.3" stroke="#59631f" stroke-width="0.41997254066265094"/>
<line x1="622.9" y1="206.3" x2="628.1" y2="204.4" stroke="#59631f" stroke-width="0.41997254066265094"/>
<polygon points="607.7,208.0 622.8,218.0 622.9,202.3 607.1,193.9" fill="#34373a" stroke="#26282a" stroke-width="0.5" stroke-linejoin="round" />
<polygon points="600.5,196.1 605.7,194.3 621.4,202.9 616.0,204.8" fill="#f6f6f6" stroke="#34373a" stroke-width="0.5936273577220024" stroke-linejoin="round" />
<line x1="605.7" y1="199.0" x2="610.9" y2="197.2" stroke="#34373a" stroke-width="0.6784312659680029"/>
<line x1="610.8" y1="201.9" x2="616.2" y2="200.0" stroke="#34373a" stroke-width="0.6784312659680029"/>
<polygon points="616.1,220.7 621.4,218.6 621.4,202.9 616.0,204.8" fill="#c6d75f" stroke="#34373a" stroke-width="0.5936273577220024" stroke-linejoin="round" />
<line x1="616.1" y1="216.7" x2="621.4" y2="214.7" stroke="#59631f" stroke-width="0.42401954123000174"/>
<line x1="616.1" y1="212.7" x2="621.4" y2="210.7" stroke="#59631f" stroke-width="0.42401954123000174"/>
<line x1="616.1" y1="208.7" x2="621.4" y2="206.8" stroke="#59631f" stroke-width="0.42401954123000174"/>
<polygon points="601.2,210.5 616.1,220.7 616.0,204.8 600.5,196.1" fill="#34373a" stroke="#26282a" stroke-width="0.5" stroke-linejoin="round" />
<polygon points="593.6,198.3 599.0,196.5 614.5,205.3 608.9,207.3" fill="#f6f6f6" stroke="#34373a" stroke-width="0.5995160123482831" stroke-linejoin="round" />
<line x1="598.7" y1="201.3" x2="604.1" y2="199.5" stroke="#34373a" stroke-width="0.6851611569694666"/>
<line x1="603.8" y1="204.3" x2="609.3" y2="202.4" stroke="#34373a" stroke-width="0.6851611569694666"/>
<polygon points="609.2,223.4 614.6,221.3 614.5,205.3 608.9,207.3" fill="#c6d75f" stroke="#34373a" stroke-width="0.5995160123482831" stroke-linejoin="round" />
<line x1="609.1" y1="219.4" x2="614.6" y2="217.3" stroke="#59631f" stroke-width="0.42822572310591656"/>
<line x1="609.0" y1="215.3" x2="614.5" y2="213.3" stroke="#59631f" stroke-width="0.42822572310591656"/>
<line x1="608.9" y1="211.3" x2="614.5" y2="209.3" stroke="#59631f" stroke-width="0.42822572310591656"/>
<polygon points="594.4,213.1 609.2,223.4 608.9,207.3 593.6,198.3" fill="#34373a" stroke="#26282a" stroke-width="0.5" stroke-linejoin="round" />
<polygon points="586.4,200.7 592.0,198.8 607.2,207.8 601.4,209.9" fill="#f6f6f6" stroke="#34373a" stroke-width="0.6056409328935469" stroke-linejoin="round" />
<line x1="591.4" y1="203.8" x2="597.1" y2="201.8" stroke="#34373a" stroke-width="0.6921610661640538"/>
<line x1="596.4" y1="206.8" x2="602.2" y2="204.8" stroke="#34373a" stroke-width="0.6921610661640538"/>
<polygon points="601.9,226.3 607.6,224.0 607.2,207.8 601.4,209.9" fill="#c6d75f" stroke="#34373a" stroke-width="0.6056409328935469" stroke-linejoin="round" />
<line x1="601.8" y1="222.2" x2="607.5" y2="220.0" stroke="#59631f" stroke-width="0.4326006663525336"/>
<line x1="601.7" y1="218.1" x2="607.4" y2="215.9" stroke="#59631f" stroke-width="0.4326006663525336"/>
<line x1="601.5" y1="214.0" x2="607.3" y2="211.9" stroke="#59631f" stroke-width="0.4326006663525336"/>
<polygon points="587.3,215.7 601.9,226.3 601.4,209.9 586.4,200.7" fill="#34373a" stroke="#26282a" stroke-width="0.5" stroke-linejoin="round" />
<polygon points="578.9,203.1 584.7,201.2 599.7,210.5 593.6,212.6" fill="#f6f6f6" stroke="#34373a" stroke-width="0.6120166297229815" stroke-linejoin="round" />
<line x1="583.8" y1="206.3" x2="589.7" y2="204.3" stroke="#34373a" stroke-width="0.6994475768262647"/>
<line x1="588.7" y1="209.5" x2="594.7" y2="207.4" stroke="#34373a" stroke-width="0.6994475768262647"/>
<polygon points="594.4,229.3 600.3,226.9 599.7,210.5 593.6,212.6" fill="#c6d75f" stroke="#34373a" stroke-width="0.6120166297229815" stroke-linejoin="round" />
<line x1="594.2" y1="225.1" x2="600.1" y2="222.8" stroke="#59631f" stroke-width="0.4371547355164154"/>
<line x1="594.0" y1="220.9" x2="600.0" y2="218.7" stroke="#59631f" stroke-width="0.4371547355164154"/>
<line x1="593.8" y1="216.8" x2="599.9" y2="214.6" stroke="#59631f" stroke-width="0.4371547355164154"/>
<polygon points="580.0,218.5 594.4,229.3 593.6,212.6 578.9,203.1" fill="#34373a" stroke="#26282a" stroke-width="0.5" stroke-linejoin="round" />
<polygon points="571.1,205.7 577.2,203.7 591.9,213.2 585.5,215.5" fill="#f6f6f6" stroke="#34373a" stroke-width="0.6186588262481321" stroke-linejoin="round" />
<line x1="575.9" y1="209.0" x2="582.1" y2="206.9" stroke="#34373a" stroke-width="0.7070386585692939"/>
<line x1="580.7" y1="212.2" x2="587.0" y2="210.0" stroke="#34373a" stroke-width="0.7070386585692939"/>
<polygon points="586.5,232.4 592.7,229.9 591.9,213.2 585.5,215.5" fill="#c6d75f" stroke="#34373a" stroke-width="0.6186588262481321" stroke-linejoin="round" />
<line x1="586.3" y1="228.1" x2="592.5" y2="225.8" stroke="#59631f" stroke-width="0.44189916160580867"/>
<line x1="586.0" y1="223.9" x2="592.3" y2="221.6" stroke="#59631f" stroke-width="0.44189916160580867"/>
<line x1="585.8" y1="219.7" x2="592.1" y2="217.4" stroke="#59631f" stroke-width="0.44189916160580867"/>
<polygon points="572.4,221.4 586.5,232.4 585.5,215.5 571.1,205.7" fill="#34373a" stroke="#26282a" stroke-width="0.5" stroke-linejoin="round" />
<polygon points="562.9,208.4 569.3,206.3 583.7,216.1 577.1,218.4" fill="#f6f6f6" stroke="#34373a" stroke-width="0.625584588393954" stroke-linejoin="round" />
<line x1="567.6" y1="211.7" x2="574.1" y2="209.5" stroke="#34373a" stroke-width="0.7149538153073762"/>
<line x1="572.4" y1="215.1" x2="578.9" y2="212.8" stroke="#34373a" stroke-width="0.7149538153073762"/>
<polygon points="578.3,235.6 584.7,233.1 583.7,216.1 577.1,218.4" fill="#c6d75f" stroke="#34373a" stroke-width="0.625584588393954" stroke-linejoin="round" />
<line x1="578.0" y1="231.3" x2="584.5" y2="228.8" stroke="#59631f" stroke-width="0.4468461345671101"/>
<line x1="577.7" y1="227.0" x2="584.2" y2="224.6" stroke="#59631f" stroke-width="0.4468461345671101"/>
<line x1="577.4" y1="222.7" x2="584.0" y2="220.3" stroke="#59631f" stroke-width="0.4468461345671101"/>
<polygon points="564.4,224.4 578.3,235.6 577.1,218.4 562.9,208.4" fill="#34373a" stroke="#26282a" stroke-width="0.5" stroke-linejoin="round" />
<polygon points="554.4,211.2 561.1,209.0 575.2,219.1 568.3,221.5" fill="#f6f6f6" stroke="#34373a" stroke-width="0.632812471008974" stroke-linejoin="round" />
<line x1="559.0" y1="214.6" x2="565.8" y2="212.3" stroke="#34373a" stroke-width="0.7232142525816846"/>
<line x1="563.7" y1="218.1" x2="570.5" y2="215.7" stroke="#34373a" stroke-width="0.7232142525816846"/>
<polygon points="569.8,239.0 576.5,236.3 575.2,219.1 568.3,221.5" fill="#c6d75f" stroke="#34373a" stroke-width="0.632812471008974" stroke-linejoin="round" />
<line x1="569.4" y1="234.6" x2="576.1" y2="232.0" stroke="#59631f" stroke-width="0.45200890786355286"/>
<line x1="569.0" y1="230.3" x2="575.8" y2="227.7" stroke="#59631f" stroke-width="0.45200890786355286"/>
<line x1="568.6" y1="225.9" x2="575.5" y2="223.4" stroke="#59631f" stroke-width="0.45200890786355286"/>
<polygon points="556.0,227.6 569.8,239.0 568.3,221.5 554.4,211.2" fill="#34373a" stroke="#26282a" stroke-width="0.5" stroke-linejoin="round" />
<polygon points="545.5,214.1 552.5,211.8 566.3,222.2 559.1,224.8" fill="#f6f6f6" stroke="#34373a" stroke-width="0.6403626838631062" stroke-linejoin="round" />
<line x1="550.0" y1="217.6" x2="557.1" y2="215.3" stroke="#34373a" stroke-width="0.7318430672721216"/>
<line x1="554.5" y1="221.2" x2="561.7" y2="218.7" stroke="#34373a" stroke-width="0.7318430672721216"/>
<polygon points="560.8,242.5 567.8,239.8 566.3,222.2 559.1,224.8" fill="#c6d75f" stroke="#34373a" stroke-width="0.6403626838631062" stroke-linejoin="round" />
<line x1="560.4" y1="238.1" x2="567.4" y2="235.4" stroke="#59631f" stroke-width="0.45740191704507593"/>
<line x1="559.9" y1="233.6" x2="567.1" y2="231.0" stroke="#59631f" stroke-width="0.45740191704507593"/>
<line x1="559.5" y1="229.2" x2="566.7" y2="226.6" stroke="#59631f" stroke-width="0.45740191704507593"/>
<polygon points="547.3,230.8 560.8,242.5 559.1,224.8 545.5,214.1" fill="#34373a" stroke="#26282a" stroke-width="0.5" stroke-linejoin="round" />
<polygon points="536.2,217.1 543.5,214.7 557.0,225.5 549.4,228.1" fill="#f6f6f6" stroke="#34373a" stroke-width="0.6482572803601651" stroke-linejoin="round" />
<line x1="540.6" y1="220.8" x2="548.0" y2="218.3" stroke="#34373a" stroke-width="0.7408654632687601"/>
<line x1="545.0" y1="224.5" x2="552.5" y2="221.9" stroke="#34373a" stroke-width="0.7408654632687601"/>
<polygon points="551.5,246.2 558.8,243.3 557.0,225.5 549.4,228.1" fill="#c6d75f" stroke="#34373a" stroke-width="0.6482572803601651" stroke-linejoin="round" />
<line x1="550.9" y1="241.7" x2="558.3" y2="238.9" stroke="#59631f" stroke-width="0.4630409145429751"/>
<line x1="550.4" y1="237.2" x2="557.9" y2="234.4" stroke="#59631f" stroke-width="0.4630409145429751"/>
<line x1="549.9" y1="232.7" x2="557.4" y2="229.9" stroke="#59631f" stroke-width="0.4630409145429751"/>
<polygon points="538.2,234.3 551.5,246.2 549.4,228.1 536.2,217.1" fill="#34373a" stroke="#26282a" stroke-width="0.5" stroke-linejoin="round" />
<polygon points="526.5,220.3 534.1,217.8 547.2,228.9 539.3,231.7" fill="#f6f6f6" stroke="#34373a" stroke-width="0.656520372675961" stroke-linejoin="round" />
<line x1="530.8" y1="224.1" x2="538.5" y2="221.5" stroke="#34373a" stroke-width="0.7503089973439554"/>
<line x1="535.1" y1="227.9" x2="542.9" y2="225.2" stroke="#34373a" stroke-width="0.7503089973439554"/>
<polygon points="541.7,250.1 549.3,247.1 547.2,228.9 539.3,231.7" fill="#c6d75f" stroke="#34373a" stroke-width="0.656520372675961" stroke-linejoin="round" />
<line x1="541.1" y1="245.5" x2="548.8" y2="242.5" stroke="#59631f" stroke-width="0.4689431233399721"/>
<line x1="540.5" y1="240.9" x2="548.3" y2="238.0" stroke="#59631f" stroke-width="0.4689431233399721"/>
<line x1="539.9" y1="236.3" x2="547.8" y2="233.4" stroke="#59631f" stroke-width="0.4689431233399721"/>
<polygon points="528.7,237.9 541.7,250.1 539.3,231.7 526.5,220.3" fill="#34373a" stroke="#26282a" stroke-width="0.5" stroke-linejoin="round" />
<polygon points="516.3,223.6 524.3,221.0 537.0,232.5 528.8,235.4" fill="#f6f6f6" stroke="#34373a" stroke-width="0.6651783777422737" stroke-linejoin="round" />
<line x1="520.4" y1="227.6" x2="528.5" y2="224.8" stroke="#34373a" stroke-width="0.7602038602768844"/>
<line x1="524.6" y1="231.5" x2="532.8" y2="228.6" stroke="#34373a" stroke-width="0.7602038602768844"/>
<polygon points="531.4,254.2 539.4,251.0 537.0,232.5 528.8,235.4" fill="#c6d75f" stroke="#34373a" stroke-width="0.6651783777422737" stroke-linejoin="round" />
<line x1="530.7" y1="249.5" x2="538.8" y2="246.4" stroke="#59631f" stroke-width="0.4751274126730527"/>
<line x1="530.1" y1="244.8" x2="538.2" y2="241.7" stroke="#59631f" stroke-width="0.4751274126730527"/>
<line x1="529.4" y1="240.1" x2="537.6" y2="237.1" stroke="#59631f" stroke-width="0.4751274126730527"/>
<polygon points="518.7,241.7 531.4,254.2 528.8,235.4 516.3,223.6" fill="#34373a" stroke="#26282a" stroke-width="0.5" stroke-linejoin="round" />
<polygon points="505.6,227.2 514.0,224.4 526.4,236.2 517.6,239.3" fill="#f6f6f6" stroke="#34373a" stroke-width="0.6742602993627099" stroke-linejoin="round" />
<line x1="509.6" y1="231.2" x2="518.1" y2="228.3" stroke="#34373a" stroke-width="0.7705831992716686"/>
<line x1="513.6" y1="235.2" x2="522.2" y2="232.3" stroke="#34373a" stroke-width="0.7705831992716686"/>
<polygon points="520.6,258.4 529.1,255.1 526.4,236.2 517.6,239.3" fill="#c6d75f" stroke="#34373a" stroke-width="0.6742602993627099" stroke-linejoin="round" />
<line x1="519.9" y1="253.7" x2="528.4" y2="250.4" stroke="#59631f" stroke-width="0.48161449954479285"/>
<line x1="519.1" y1="248.9" x2="527.7" y2="245.7" stroke="#59631f" stroke-width="0.48161449954479285"/>
<line x1="518.4" y1="244.1" x2="527.0" y2="240.9" stroke="#59631f" stroke-width="0.48161449954479285"/>
<polygon points="508.2,245.6 520.6,258.4 517.6,239.3 505.6,227.2" fill="#34373a" stroke="#26282a" stroke-width="0.5" stroke-linejoin="round" />
<polygon points="494.3,230.8 503.1,227.9 515.1,240.2 506.0,243.4" fill="#f6f6f6" stroke="#34373a" stroke-width="0.6837980528076935" stroke-linejoin="round" />
<line x1="498.2" y1="235.0" x2="507.1" y2="232.0" stroke="#34373a" stroke-width="0.7814834889230783"/>
<line x1="502.1" y1="239.2" x2="511.1" y2="236.1" stroke="#34373a" stroke-width="0.7814834889230783"/>
<polygon points="509.3,262.9 518.2,259.4 515.1,240.2 506.0,243.4" fill="#c6d75f" stroke="#34373a" stroke-width="0.6837980528076935" stroke-linejoin="round" />
<line x1="508.5" y1="258.0" x2="517.4" y2="254.6" stroke="#59631f" stroke-width="0.4884271805769239"/>
<line x1="507.6" y1="253.1" x2="516.6" y2="249.8" stroke="#59631f" stroke-width="0.4884271805769239"/>
<line x1="506.8" y1="248.3" x2="515.9" y2="245.0" stroke="#59631f" stroke-width="0.4884271805769239"/>
<polygon points="497.2,249.8 509.3,262.9 506.0,243.4 494.3,230.8" fill="#34373a" stroke="#26282a" stroke-width="0.5" stroke-linejoin="round" />
<polygon points="482.5,234.7 491.8,231.7 503.3,244.3 493.7,247.7" fill="#f6f6f6" stroke="#34373a" stroke-width="0.6938268395429422" stroke-linejoin="round" />
<line x1="486.2" y1="239.0" x2="495.6" y2="235.9" stroke="#34373a" stroke-width="0.7929449594776483"/>
<line x1="490.0" y1="243.4" x2="499.5" y2="240.1" stroke="#34373a" stroke-width="0.7929449594776483"/>
<polygon points="497.4,267.6 506.7,263.9 503.3,244.3 493.7,247.7" fill="#c6d75f" stroke="#34373a" stroke-width="0.6938268395429422" stroke-linejoin="round" />
<line x1="496.5" y1="262.6" x2="505.9" y2="259.0" stroke="#59631f" stroke-width="0.4955905996735302"/>
<line x1="495.5" y1="257.7" x2="505.0" y2="254.1" stroke="#59631f" stroke-width="0.4955905996735302"/>
<line x1="494.6" y1="252.7" x2="504.2" y2="249.2" stroke="#59631f" stroke-width="0.4955905996735302"/>
<polygon points="485.6,254.2 497.4,267.6 493.7,247.7 482.5,234.7" fill="#34373a" stroke="#26282a" stroke-width="0.5" stroke-linejoin="round" />
<line x1="484.8" y1="249.3" x2="496.5" y2="262.6" stroke="#777" stroke-width="0.4"/>
<line x1="484.0" y1="244.4" x2="495.5" y2="257.7" stroke="#777" stroke-width="0.4"/>
<line x1="483.3" y1="239.6" x2="494.6" y2="252.7" stroke="#777" stroke-width="0.4"/>
<line x1="489.5" y1="258.7" x2="486.2" y2="239.0" stroke="#777" stroke-width="0.4"/>
<line x1="493.4" y1="263.1" x2="490.0" y2="243.4" stroke="#777" stroke-width="0.4"/>
<line x1="481.5" y1="253.4" x2="495.0" y2="269.0" stroke="#5d5c12" stroke-width="0.7"/>
<line x1="495.0" y1="269.0" x2="658.0" y2="204.4" stroke="#5d5c12" stroke-width="0.7"/>
<line x1="658.0" y1="204.4" x2="660.1" y2="177.6" stroke="#5d5c12" stroke-width="0.6"/></svg>
<div style="position:absolute;top:184.00px;height:10px;line-height:10px;font-size:5.60px;font-weight:normal;color:#555;white-space:nowrap;left:663.00px;">2591</div>
<div style="position:absolute;top:241.30px;height:10px;line-height:10px;font-size:5.60px;font-weight:normal;color:#555;white-space:nowrap;left:570.30px;">16154</div>
<div style="position:absolute;top:266.50px;height:10px;line-height:10px;font-size:5.60px;font-weight:normal;color:#555;white-space:nowrap;left:477.30px;">2438</div>
<svg style="position:absolute;left:0;top:0;" width="767" height="421" viewBox="0 0 767 421"><polygon points="537.5,306.6 543.8,302.6 543.8,310.6" fill="#b5b5b5"/><polygon points="633.5,306.6 627,302.3 627,310.9" fill="#2c3e3e"/></svg>
<div style="position:absolute;top:301.70px;height:10px;line-height:10px;font-size:5.57px;font-weight:normal;color:#444;white-space:nowrap;left:554.30px;">Showing Solution <b>1</b> of <b>40</b></div>
<div style="position:absolute;top:349.70px;height:10px;line-height:10px;font-size:5.65px;font-weight:normal;color:#222;white-space:nowrap;left:52.80px;">Sol. No.</div>
<div style="position:absolute;top:349.70px;height:10px;line-height:10px;font-size:5.65px;font-weight:normal;color:#222;white-space:nowrap;left:81.30px;">Pattern Type</div>
<div style="position:absolute;top:349.70px;height:10px;line-height:10px;font-size:5.65px;font-weight:normal;color:#222;white-space:nowrap;left:134.00px;"># Per Load</div>
<div style="position:absolute;top:349.70px;height:10px;line-height:10px;font-size:5.65px;font-weight:normal;color:#222;white-space:nowrap;left:171.50px;"># Per Layer</div>
<div style="position:absolute;top:349.70px;height:10px;line-height:10px;font-size:5.65px;font-weight:normal;color:#222;white-space:nowrap;left:210.00px;"># of Layers</div>
<div style="position:absolute;top:349.70px;height:10px;line-height:10px;font-size:5.65px;font-weight:normal;color:#222;white-space:nowrap;left:248.00px;">SP Per Pallet</div>
<div style="position:absolute;top:349.70px;height:10px;line-height:10px;font-size:5.65px;font-weight:normal;color:#222;white-space:nowrap;left:291.00px;">SP Per Truck</div>
<div style="position:absolute;top:349.70px;height:10px;line-height:10px;font-size:5.65px;font-weight:normal;color:#222;white-space:nowrap;left:333.50px;">Dim. Vertical</div>
<div style="position:absolute;top:349.70px;height:10px;line-height:10px;font-size:5.65px;font-weight:normal;color:#222;white-space:nowrap;left:364.00px;width:60.00px;text-align:center;">Cube Eff.</div>
<div style="position:absolute;top:349.70px;height:10px;line-height:10px;font-size:5.65px;font-weight:normal;color:#222;white-space:nowrap;left:394.00px;width:60.00px;text-align:center;">Area Eff.</div>
<div style="position:absolute;top:349.70px;height:10px;line-height:10px;font-size:5.65px;font-weight:normal;color:#222;white-space:nowrap;left:433.00px;width:60.00px;text-align:center;">Length Under</div>
<div style="position:absolute;top:349.70px;height:10px;line-height:10px;font-size:5.65px;font-weight:normal;color:#222;white-space:nowrap;left:476.00px;width:60.00px;text-align:center;">Width Under</div>
<div style="position:absolute;top:349.70px;height:10px;line-height:10px;font-size:5.65px;font-weight:normal;color:#222;white-space:nowrap;left:522.00px;width:60.00px;text-align:center;">Product Length</div>
<div style="position:absolute;top:349.70px;height:10px;line-height:10px;font-size:5.65px;font-weight:normal;color:#222;white-space:nowrap;left:570.50px;width:60.00px;text-align:center;">Product Width</div>
<div style="position:absolute;top:349.70px;height:10px;line-height:10px;font-size:5.65px;font-weight:normal;color:#222;white-space:nowrap;left:619.00px;width:60.00px;text-align:center;">Product Height</div>
<div style="position:absolute;top:349.70px;height:10px;line-height:10px;font-size:5.65px;font-weight:normal;color:#222;white-space:nowrap;left:669.00px;width:60.00px;text-align:center;">Product Weight</div>
<div style="position:absolute;left:50.80px;top:362.00px;width:661.20px;height:12.00px;background:#4a6585;"></div>
<div style="position:absolute;top:363.10px;height:10px;line-height:10px;font-size:5.20px;font-weight:bold;color:#ffffff;white-space:nowrap;left:53.00px;">1</div>
<div style="position:absolute;top:363.10px;height:10px;line-height:10px;font-size:5.20px;font-weight:bold;color:#ffffff;white-space:nowrap;left:81.30px;">Column</div>
<div style="position:absolute;top:363.10px;height:10px;line-height:10px;font-size:5.20px;font-weight:bold;color:#ffffff;white-space:nowrap;left:134.50px;">40</div>
<div style="position:absolute;top:363.10px;height:10px;line-height:10px;font-size:5.20px;font-weight:bold;color:#ffffff;white-space:nowrap;left:172.00px;">40</div>
<div style="position:absolute;top:363.10px;height:10px;line-height:10px;font-size:5.20px;font-weight:bold;color:#ffffff;white-space:nowrap;left:210.50px;">1</div>
<div style="position:absolute;top:363.10px;height:10px;line-height:10px;font-size:5.20px;font-weight:bold;color:#ffffff;white-space:nowrap;left:248.50px;">8</div>
<div style="position:absolute;top:363.10px;height:10px;line-height:10px;font-size:5.20px;font-weight:bold;color:#ffffff;white-space:nowrap;left:291.50px;">320</div>
<div style="position:absolute;top:363.10px;height:10px;line-height:10px;font-size:5.20px;font-weight:bold;color:#ffffff;white-space:nowrap;left:334.00px;">Height</div>
<div style="position:absolute;top:363.10px;height:10px;line-height:10px;font-size:5.20px;font-weight:bold;color:#ffffff;white-space:nowrap;left:364.00px;width:60.00px;text-align:center;">54.5</div>
<div style="position:absolute;top:363.10px;height:10px;line-height:10px;font-size:5.20px;font-weight:bold;color:#ffffff;white-space:nowrap;left:394.00px;width:60.00px;text-align:center;">97.5</div>
<div style="position:absolute;top:363.10px;height:10px;line-height:10px;font-size:5.20px;font-weight:bold;color:#ffffff;white-space:nowrap;left:437.00px;width:60.00px;text-align:center;">77.20</div>
<div style="position:absolute;top:363.10px;height:10px;line-height:10px;font-size:5.20px;font-weight:bold;color:#ffffff;white-space:nowrap;left:477.80px;width:60.00px;text-align:center;">19.20</div>
<div style="position:absolute;top:363.10px;height:10px;line-height:10px;font-size:5.20px;font-weight:bold;color:#ffffff;white-space:nowrap;left:522.00px;width:60.00px;text-align:center;">16000.00</div>
<div style="position:absolute;top:363.10px;height:10px;line-height:10px;font-size:5.20px;font-weight:bold;color:#ffffff;white-space:nowrap;left:570.50px;width:60.00px;text-align:center;">2400.00</div>
<div style="position:absolute;top:363.10px;height:10px;line-height:10px;font-size:5.20px;font-weight:bold;color:#ffffff;white-space:nowrap;left:619.00px;width:60.00px;text-align:center;">1449.21</div>
<div style="position:absolute;top:363.10px;height:10px;line-height:10px;font-size:5.20px;font-weight:bold;color:#ffffff;white-space:nowrap;left:669.00px;width:60.00px;text-align:center;">1720.00</div>
<div style="position:absolute;left:50.80px;top:374.40px;width:661.20px;height:12.60px;background:#f2f2f2;"></div>
<div style="position:absolute;top:375.70px;height:10px;line-height:10px;font-size:5.20px;font-weight:normal;color:#5e5e5e;white-space:nowrap;left:53.00px;">2</div>
<div style="position:absolute;top:375.70px;height:10px;line-height:10px;font-size:5.20px;font-weight:normal;color:#5e5e5e;white-space:nowrap;left:81.30px;">Interlock</div>
<div style="position:absolute;top:375.70px;height:10px;line-height:10px;font-size:5.20px;font-weight:normal;color:#5e5e5e;white-space:nowrap;left:134.50px;">40</div>
<div style="position:absolute;top:375.70px;height:10px;line-height:10px;font-size:5.20px;font-weight:normal;color:#5e5e5e;white-space:nowrap;left:172.00px;">40</div>
<div style="position:absolute;top:375.70px;height:10px;line-height:10px;font-size:5.20px;font-weight:normal;color:#5e5e5e;white-space:nowrap;left:210.50px;">1</div>
<div style="position:absolute;top:375.70px;height:10px;line-height:10px;font-size:5.20px;font-weight:normal;color:#5e5e5e;white-space:nowrap;left:248.50px;">8</div>
<div style="position:absolute;top:375.70px;height:10px;line-height:10px;font-size:5.20px;font-weight:normal;color:#5e5e5e;white-space:nowrap;left:291.50px;">320</div>
<div style="position:absolute;top:375.70px;height:10px;line-height:10px;font-size:5.20px;font-weight:normal;color:#5e5e5e;white-space:nowrap;left:334.00px;">Height</div>
<div style="position:absolute;top:375.70px;height:10px;line-height:10px;font-size:5.20px;font-weight:normal;color:#5e5e5e;white-space:nowrap;left:364.00px;width:60.00px;text-align:center;">54.5</div>
<div style="position:absolute;top:375.70px;height:10px;line-height:10px;font-size:5.20px;font-weight:normal;color:#5e5e5e;white-space:nowrap;left:394.00px;width:60.00px;text-align:center;">97.5</div>
<div style="position:absolute;top:375.70px;height:10px;line-height:10px;font-size:5.20px;font-weight:normal;color:#5e5e5e;white-space:nowrap;left:437.00px;width:60.00px;text-align:center;">77.20</div>
<div style="position:absolute;top:375.70px;height:10px;line-height:10px;font-size:5.20px;font-weight:normal;color:#5e5e5e;white-space:nowrap;left:477.80px;width:60.00px;text-align:center;">19.20</div>
<div style="position:absolute;top:375.70px;height:10px;line-height:10px;font-size:5.20px;font-weight:normal;color:#5e5e5e;white-space:nowrap;left:522.00px;width:60.00px;text-align:center;">16000.00</div>
<div style="position:absolute;top:375.70px;height:10px;line-height:10px;font-size:5.20px;font-weight:normal;color:#5e5e5e;white-space:nowrap;left:570.50px;width:60.00px;text-align:center;">2400.00</div>
<div style="position:absolute;top:375.70px;height:10px;line-height:10px;font-size:5.20px;font-weight:normal;color:#5e5e5e;white-space:nowrap;left:619.00px;width:60.00px;text-align:center;">1449.21</div>
<div style="position:absolute;top:375.70px;height:10px;line-height:10px;font-size:5.20px;font-weight:normal;color:#5e5e5e;white-space:nowrap;left:669.00px;width:60.00px;text-align:center;">1720.00</div>
<div style="position:absolute;top:388.30px;height:10px;line-height:10px;font-size:5.20px;font-weight:normal;color:#5e5e5e;white-space:nowrap;left:53.00px;">3</div>
<div style="position:absolute;top:388.30px;height:10px;line-height:10px;font-size:5.20px;font-weight:normal;color:#5e5e5e;white-space:nowrap;left:81.30px;">Interlock</div>
<div style="position:absolute;top:388.30px;height:10px;line-height:10px;font-size:5.20px;font-weight:normal;color:#5e5e5e;white-space:nowrap;left:134.50px;">40</div>
<div style="position:absolute;top:388.30px;height:10px;line-height:10px;font-size:5.20px;font-weight:normal;color:#5e5e5e;white-space:nowrap;left:172.00px;">40</div>
<div style="position:absolute;top:388.30px;height:10px;line-height:10px;font-size:5.20px;font-weight:normal;color:#5e5e5e;white-space:nowrap;left:210.50px;">1</div>
<div style="position:absolute;top:388.30px;height:10px;line-height:10px;font-size:5.20px;font-weight:normal;color:#5e5e5e;white-space:nowrap;left:248.50px;">8</div>
<div style="position:absolute;top:388.30px;height:10px;line-height:10px;font-size:5.20px;font-weight:normal;color:#5e5e5e;white-space:nowrap;left:291.50px;">320</div>
<div style="position:absolute;top:388.30px;height:10px;line-height:10px;font-size:5.20px;font-weight:normal;color:#5e5e5e;white-space:nowrap;left:334.00px;">Height</div>
<div style="position:absolute;top:388.30px;height:10px;line-height:10px;font-size:5.20px;font-weight:normal;color:#5e5e5e;white-space:nowrap;left:364.00px;width:60.00px;text-align:center;">54.5</div>
<div style="position:absolute;top:388.30px;height:10px;line-height:10px;font-size:5.20px;font-weight:normal;color:#5e5e5e;white-space:nowrap;left:394.00px;width:60.00px;text-align:center;">97.5</div>
<div style="position:absolute;top:388.30px;height:10px;line-height:10px;font-size:5.20px;font-weight:normal;color:#5e5e5e;white-space:nowrap;left:437.00px;width:60.00px;text-align:center;">77.20</div>
<div style="position:absolute;top:388.30px;height:10px;line-height:10px;font-size:5.20px;font-weight:normal;color:#5e5e5e;white-space:nowrap;left:477.80px;width:60.00px;text-align:center;">19.20</div>
<div style="position:absolute;top:388.30px;height:10px;line-height:10px;font-size:5.20px;font-weight:normal;color:#5e5e5e;white-space:nowrap;left:522.00px;width:60.00px;text-align:center;">16000.00</div>
<div style="position:absolute;top:388.30px;height:10px;line-height:10px;font-size:5.20px;font-weight:normal;color:#5e5e5e;white-space:nowrap;left:570.50px;width:60.00px;text-align:center;">2400.00</div>
<div style="position:absolute;top:388.30px;height:10px;line-height:10px;font-size:5.20px;font-weight:normal;color:#5e5e5e;white-space:nowrap;left:619.00px;width:60.00px;text-align:center;">1449.21</div>
<div style="position:absolute;top:388.30px;height:10px;line-height:10px;font-size:5.20px;font-weight:normal;color:#5e5e5e;white-space:nowrap;left:669.00px;width:60.00px;text-align:center;">1720.00</div>
<div style="position:absolute;left:50.80px;top:399.60px;width:661.20px;height:12.60px;background:#f2f2f2;"></div>
<div style="position:absolute;top:400.90px;height:10px;line-height:10px;font-size:5.20px;font-weight:normal;color:#5e5e5e;white-space:nowrap;left:53.00px;">4</div>
<div style="position:absolute;top:400.90px;height:10px;line-height:10px;font-size:5.20px;font-weight:normal;color:#5e5e5e;white-space:nowrap;left:81.30px;">Interlock</div>
<div style="position:absolute;top:400.90px;height:10px;line-height:10px;font-size:5.20px;font-weight:normal;color:#5e5e5e;white-space:nowrap;left:134.50px;">40</div>
<div style="position:absolute;top:400.90px;height:10px;line-height:10px;font-size:5.20px;font-weight:normal;color:#5e5e5e;white-space:nowrap;left:172.00px;">40</div>
<div style="position:absolute;top:400.90px;height:10px;line-height:10px;font-size:5.20px;font-weight:normal;color:#5e5e5e;white-space:nowrap;left:210.50px;">1</div>
<div style="position:absolute;top:400.90px;height:10px;line-height:10px;font-size:5.20px;font-weight:normal;color:#5e5e5e;white-space:nowrap;left:248.50px;">8</div>
<div style="position:absolute;top:400.90px;height:10px;line-height:10px;font-size:5.20px;font-weight:normal;color:#5e5e5e;white-space:nowrap;left:291.50px;">320</div>
<div style="position:absolute;top:400.90px;height:10px;line-height:10px;font-size:5.20px;font-weight:normal;color:#5e5e5e;white-space:nowrap;left:334.00px;">Height</div>
<div style="position:absolute;top:400.90px;height:10px;line-height:10px;font-size:5.20px;font-weight:normal;color:#5e5e5e;white-space:nowrap;left:364.00px;width:60.00px;text-align:center;">54.5</div>
<div style="position:absolute;top:400.90px;height:10px;line-height:10px;font-size:5.20px;font-weight:normal;color:#5e5e5e;white-space:nowrap;left:394.00px;width:60.00px;text-align:center;">97.5</div>
<div style="position:absolute;top:400.90px;height:10px;line-height:10px;font-size:5.20px;font-weight:normal;color:#5e5e5e;white-space:nowrap;left:437.00px;width:60.00px;text-align:center;">77.20</div>
<div style="position:absolute;top:400.90px;height:10px;line-height:10px;font-size:5.20px;font-weight:normal;color:#5e5e5e;white-space:nowrap;left:477.80px;width:60.00px;text-align:center;">19.20</div>
<div style="position:absolute;top:400.90px;height:10px;line-height:10px;font-size:5.20px;font-weight:normal;color:#5e5e5e;white-space:nowrap;left:522.00px;width:60.00px;text-align:center;">16000.00</div>
<div style="position:absolute;top:400.90px;height:10px;line-height:10px;font-size:5.20px;font-weight:normal;color:#5e5e5e;white-space:nowrap;left:570.50px;width:60.00px;text-align:center;">2400.00</div>
<div style="position:absolute;top:400.90px;height:10px;line-height:10px;font-size:5.20px;font-weight:normal;color:#5e5e5e;white-space:nowrap;left:619.00px;width:60.00px;text-align:center;">1449.21</div>
<div style="position:absolute;top:400.90px;height:10px;line-height:10px;font-size:5.20px;font-weight:normal;color:#5e5e5e;white-space:nowrap;left:669.00px;width:60.00px;text-align:center;">1720.00</div>
<div style="position:absolute;top:413.50px;height:10px;line-height:10px;font-size:5.20px;font-weight:normal;color:#5e5e5e;white-space:nowrap;left:53.00px;">5</div>
<div style="position:absolute;top:413.50px;height:10px;line-height:10px;font-size:5.20px;font-weight:normal;color:#5e5e5e;white-space:nowrap;left:81.30px;">Interlock</div>
<div style="position:absolute;top:413.50px;height:10px;line-height:10px;font-size:5.20px;font-weight:normal;color:#5e5e5e;white-space:nowrap;left:134.50px;">40</div>
<div style="position:absolute;top:413.50px;height:10px;line-height:10px;font-size:5.20px;font-weight:normal;color:#5e5e5e;white-space:nowrap;left:172.00px;">40</div>
<div style="position:absolute;top:413.50px;height:10px;line-height:10px;font-size:5.20px;font-weight:normal;color:#5e5e5e;white-space:nowrap;left:210.50px;">1</div>
<div style="position:absolute;top:413.50px;height:10px;line-height:10px;font-size:5.20px;font-weight:normal;color:#5e5e5e;white-space:nowrap;left:248.50px;">8</div>
<div style="position:absolute;top:413.50px;height:10px;line-height:10px;font-size:5.20px;font-weight:normal;color:#5e5e5e;white-space:nowrap;left:291.50px;">320</div>
<div style="position:absolute;top:413.50px;height:10px;line-height:10px;font-size:5.20px;font-weight:normal;color:#5e5e5e;white-space:nowrap;left:334.00px;">Height</div>
<div style="position:absolute;top:413.50px;height:10px;line-height:10px;font-size:5.20px;font-weight:normal;color:#5e5e5e;white-space:nowrap;left:364.00px;width:60.00px;text-align:center;">54.5</div>
<div style="position:absolute;top:413.50px;height:10px;line-height:10px;font-size:5.20px;font-weight:normal;color:#5e5e5e;white-space:nowrap;left:394.00px;width:60.00px;text-align:center;">97.5</div>
<div style="position:absolute;top:413.50px;height:10px;line-height:10px;font-size:5.20px;font-weight:normal;color:#5e5e5e;white-space:nowrap;left:437.00px;width:60.00px;text-align:center;">77.20</div>
<div style="position:absolute;top:413.50px;height:10px;line-height:10px;font-size:5.20px;font-weight:normal;color:#5e5e5e;white-space:nowrap;left:477.80px;width:60.00px;text-align:center;">19.20</div>
<div style="position:absolute;top:413.50px;height:10px;line-height:10px;font-size:5.20px;font-weight:normal;color:#5e5e5e;white-space:nowrap;left:522.00px;width:60.00px;text-align:center;">16000.00</div>
<div style="position:absolute;top:413.50px;height:10px;line-height:10px;font-size:5.20px;font-weight:normal;color:#5e5e5e;white-space:nowrap;left:570.50px;width:60.00px;text-align:center;">2400.00</div>
<div style="position:absolute;top:413.50px;height:10px;line-height:10px;font-size:5.20px;font-weight:normal;color:#5e5e5e;white-space:nowrap;left:619.00px;width:60.00px;text-align:center;">1449.21</div>
<div style="position:absolute;top:413.50px;height:10px;line-height:10px;font-size:5.20px;font-weight:normal;color:#5e5e5e;white-space:nowrap;left:669.00px;width:60.00px;text-align:center;">1720.00</div>
<div style="position:absolute;left:51.00px;top:348.00px;width:669.00px;height:0.60px;background:#f0f0f0;"></div>
<div style="position:absolute;left:712.50px;top:361.80px;width:7.50px;height:59.20px;background:#fafafa;"></div>
<div style="position:absolute;left:714.20px;top:375.90px;width:4.60px;height:37.80px;background:#979797;border-radius:2.3px;"></div>
<svg style="position:absolute;left:0;top:0;" width="767" height="421" viewBox="0 0 767 421"><polygon points="713.4,371.2 718.8,371.2 716.1,368" fill="#777"/></svg>
</body></html>
